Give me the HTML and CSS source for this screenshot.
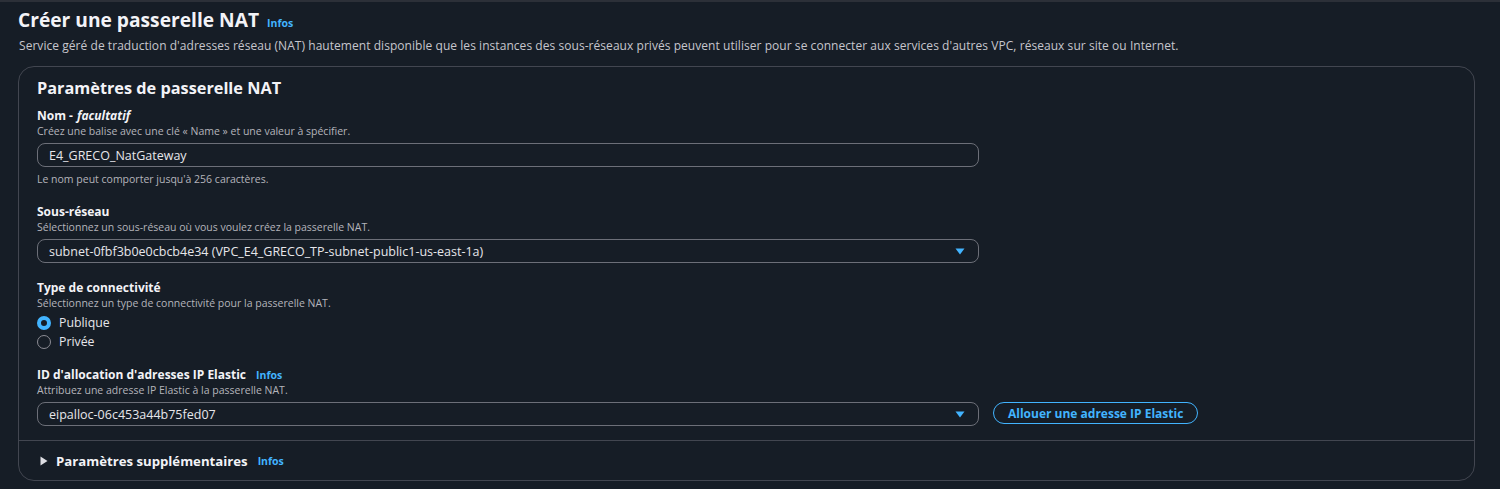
FILE: index.html
```html
<!DOCTYPE html>
<html lang="fr">
<head>
<meta charset="utf-8">
<title>Créer une passerelle NAT</title>
<link rel="stylesheet" href="styles.css">
</head>
<body>
<div class="topstrip"></div>
<main class="page">
  <header class="page-header">
    <h1 class="title">Créer une passerelle NAT <a class="info" href="#">Infos</a></h1>
    <p class="page-desc">Service géré de traduction d'adresses réseau (NAT) hautement disponible que les instances des sous-réseaux privés peuvent utiliser pour se connecter aux services d'autres VPC, réseaux sur site ou Internet.</p>
  </header>

  <section class="container">
    <div class="container-body">
      <h2 class="container-title">Paramètres de passerelle NAT</h2>

      <div class="field">
        <div class="label">Nom - <i>facultatif</i></div>
        <div class="desc">Créez une balise avec une clé « Name » et une valeur à spécifier.</div>
        <div class="input">E4_GRECO_NatGateway</div>
        <div class="constraint">Le nom peut comporter jusqu'à 256 caractères.</div>
      </div>

      <div class="field">
        <div class="label">Sous-réseau</div>
        <div class="desc">Sélectionnez un sous-réseau où vous voulez créez la passerelle NAT.</div>
        <div class="input select">
          <span>subnet-0fbf3b0e0cbcb4e34 (VPC_E4_GRECO_TP-subnet-public1-us-east-1a)</span>
          <svg class="caret" width="10" height="7" viewBox="0 0 10 7"><path d="M0.5 0.5h9L5 6.5z" fill="#42b4ff"/></svg>
        </div>
      </div>

      <div class="field">
        <div class="label">Type de connectivité</div>
        <div class="desc">Sélectionnez un type de connectivité pour la passerelle NAT.</div>
        <div class="radios">
          <div class="radio"><span class="dot checked"></span>Publique</div>
          <div class="radio"><span class="dot"></span>Privée</div>
        </div>
      </div>

      <div class="field">
        <div class="label">ID d'allocation d'adresses IP Elastic <a class="info" href="#">Infos</a></div>
        <div class="desc">Attribuez une adresse IP Elastic à la passerelle NAT.</div>
        <div class="row">
          <div class="input select">
            <span>eipalloc-06c453a44b75fed07</span>
            <svg class="caret" width="10" height="7" viewBox="0 0 10 7"><path d="M0.5 0.5h9L5 6.5z" fill="#42b4ff"/></svg>
          </div>
          <button class="btn" type="button">Allouer une adresse IP Elastic</button>
        </div>
      </div>
    </div>

    <div class="expander">
      <svg class="tri" width="8" height="10" viewBox="0 0 8 10"><path d="M0.5 0.5v9L7.5 5z" fill="#dedee3"/></svg>
      <span class="exp-title">Paramètres supplémentaires</span>
      <a class="info" href="#">Infos</a>
    </div>
  </section>
</main>
</body>
</html>
```

FILE: styles.css
```css
* { box-sizing: border-box; }

html, body {
  margin: 0;
  padding: 0;
  background: #161d26;
  color: #dedee3;
  font-family: "Open Sans", "Noto Sans", Arial, sans-serif;
}

.topstrip {
  height: 2px;
  background: #2c3038;
}

.page {
  padding: 5px 25px 0 18px;
}

.title {
  margin: 0;
  font-size: 19.2px;
  line-height: 26px;
  font-weight: 700;
  color: #f3f3f7;
  display: flex;
  align-items: baseline;
  gap: 8px;
}

.info {
  color: #42b4ff;
  font-size: 10.5px;
  font-weight: 700;
  text-decoration: none;
}

.page-desc {
  margin: 1px 0 0 1px;
  font-size: 12px;
  letter-spacing: 0.05px;
  line-height: 18px;
  color: #c6c6cd;
}

.container {
  margin-top: 11px;
  border: 1px solid #424650;
  border-radius: 16px;
}

.container-body {
  padding: 9px 18px 14px 18px;
  border-bottom: 1px solid #424650;
}

.container-title {
  margin: 0 0 8px 0;
  font-size: 16.3px;
  line-height: 24px;
  font-weight: 700;
  color: #f3f3f7;
}

.field {
  margin-bottom: 17px;
}
.field:last-child { margin-bottom: 0; }

.label {
  font-size: 12px;
  line-height: 16px;
  font-weight: 700;
  color: #f3f3f7;
  display: flex;
  align-items: baseline;
  gap: 10px;
}
.label i { margin-left: -6px; }

.desc, .constraint {
  font-size: 10.5px;
  line-height: 15px;
  color: #b4b4bb;
}

.constraint { margin-top: 5px; }

.input {
  margin-top: 4px;
  width: 942px;
  height: 24px;
  border: 1px solid #6c6f78;
  border-radius: 8px;
  padding: 0 11px;
  display: flex;
  align-items: center;
  font-size: 12.5px;
  color: #e6e6ea;
}

.select { justify-content: space-between; }
.caret { margin-right: 2px; }

.radios {
  margin-top: 4px;
  display: flex;
  flex-direction: column;
  gap: 3px;
}

.radio {
  display: flex;
  align-items: center;
  gap: 8px;
  font-size: 12.3px;
  line-height: 16px;
  color: #e6e6ea;
}

.dot {
  width: 14px;
  height: 14px;
  border-radius: 50%;
  border: 1.5px solid #8c8c94;
}
.dot.checked {
  border: 4px solid #42b4ff;
  background: #161d26;
}

.row {
  display: flex;
  align-items: center;
  gap: 14px;
}
.row .input { margin-top: 4px; }

.btn {
  margin-top: 2px;
  height: 22px;
  padding: 0 14px;
  border: 1.5px solid #42b4ff;
  border-radius: 12px;
  background: transparent;
  color: #42b4ff;
  font-family: inherit;
  font-size: 12px;
  font-weight: 700;
}

.expander {
  display: flex;
  align-items: center;
  height: 39px;
  padding-left: 21px;
}
.tri { margin-right: 8px; }
.exp-title {
  font-size: 13.2px;
  font-weight: 700;
  color: #f3f3f7;
  margin-right: 10px;
}
```
